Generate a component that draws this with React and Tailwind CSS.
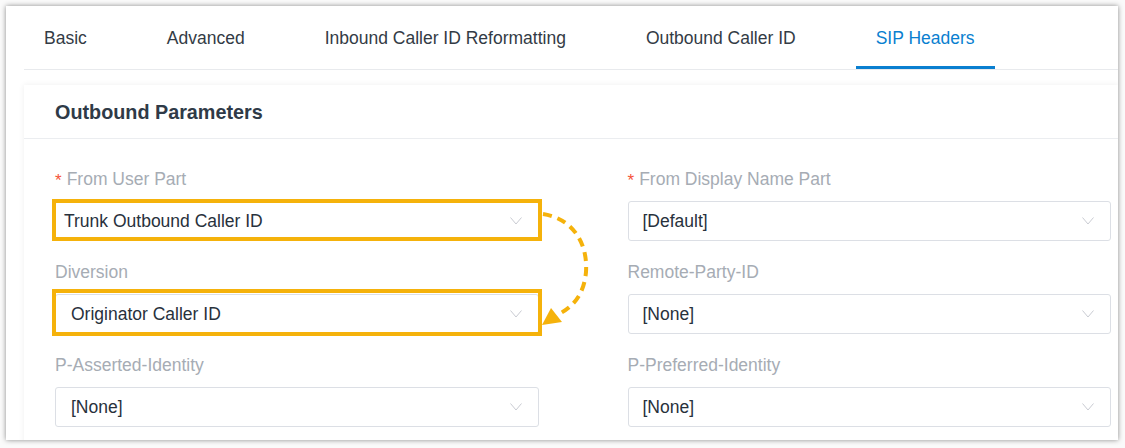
import React from "react";

const tabs = ["Basic", "Advanced", "Inbound Caller ID Reformatting", "Outbound Caller ID", "SIP Headers"];

const Chevron = () => (
  <svg width="12" height="8" viewBox="0 0 12 8" fill="none" className="shrink-0">
    <path d="M0.5 0.5 L6 7 L11.5 0.5" stroke="#c9ccd2" strokeWidth="1" />
  </svg>
);

const Field = ({ label, required, value, mark, textPad = "pl-[15px]" }) => (
  <div className="flex flex-col">
    <div className="h-[22px] flex items-center text-[17.5px] text-[#a6acb4] leading-none">
      {required && <span className="text-[#f5543a] mr-[5px] text-[17px]">*</span>}
      {label}
    </div>
    <div className="relative mt-[10px] h-[40px] border border-[#dcdfe5] rounded-[3px] bg-white flex items-center justify-between pr-[16px]">
      <span className={`${textPad} text-[17.5px] text-[#28313c]`}>{value}</span>
      <Chevron />
      {mark === "top" && (
        <span className="absolute -left-[4px] -right-[4px] -top-[3px] -bottom-[1px] border-[4px] border-[#f5b20b] pointer-events-none" />
      )}
      {mark === "bottom" && (
        <span className="absolute -left-[4px] -right-[4px] -top-[6px] -bottom-[3px] border-[4px] border-[#f5b20b] pointer-events-none" />
      )}
    </div>
  </div>
);

export default function App() {
  return (
    <div className="w-[1125px] h-[448px] bg-[#fafafa] overflow-hidden" style={{ fontFamily: '"Liberation Sans", Arial, sans-serif' }}>
      <div className="relative mt-[6px] ml-[6px] w-[1112px] h-[434px] bg-white shadow-[0_0_5px_rgba(0,0,0,0.45)] overflow-hidden">
        {/* tab bar */}
        <div className="ml-[18px] h-[64px] flex gap-10 border-b border-[#e8eaed]">
          {tabs.map((t) => {
            const active = t === "SIP Headers";
            return (
              <div
                key={t}
                className={`px-5 flex items-center text-[17.5px] pt-[2px] ${
                  active ? "text-[#0a7fd0] border-b-[3px] border-[#0a7fd0] pt-[5px]" : "text-[#333b45]"
                }`}
              >
                {t}
              </div>
            );
          })}
        </div>

        {/* parameters card */}
        <div className="ml-[18px] mt-[15px] bg-white shadow-[0_0_6px_rgba(0,0,0,0.07)] h-[400px]">
          <div className="h-[54px] flex items-center pl-[31px] pt-[2px] border-b border-[#ebedf0] text-[19.8px] font-bold text-[#2f3a47]">
            Outbound Parameters
          </div>
          <div className="pl-[31px] pr-[7px] pt-[30px] grid grid-cols-2 gap-x-[89px] gap-y-[21px]">
            <Field label="From User Part" required value="Trunk Outbound Caller ID" mark="top" textPad="pl-[8px]" />
            <Field label="From Display Name Part" required value="[Default]" textPad="pl-[14px]" />
            <Field label="Diversion" value="Originator Caller ID" mark="bottom" />
            <Field label="Remote-Party-ID" value="[None]" textPad="pl-[14px]" />
            <Field label="P-Asserted-Identity" value="[None]" />
            <Field label="P-Preferred-Identity" value="[None]" textPad="pl-[14px]" />
          </div>
        </div>

        {/* dashed arrow from the first field to the second */}
        <svg className="absolute left-0 top-0 pointer-events-none" width="1112" height="434" viewBox="6 6 1112 434">
          <path
            d="M543 214 C570 218 588 240 586 272 C584 294 574 306 559 314"
            fill="none"
            stroke="#f5b20b"
            strokeWidth="4"
            strokeDasharray="9 6"
          />
          <path d="M542 325 L551 308 L562 322 Z" fill="#f5b20b" />
        </svg>
      </div>
    </div>
  );
}
